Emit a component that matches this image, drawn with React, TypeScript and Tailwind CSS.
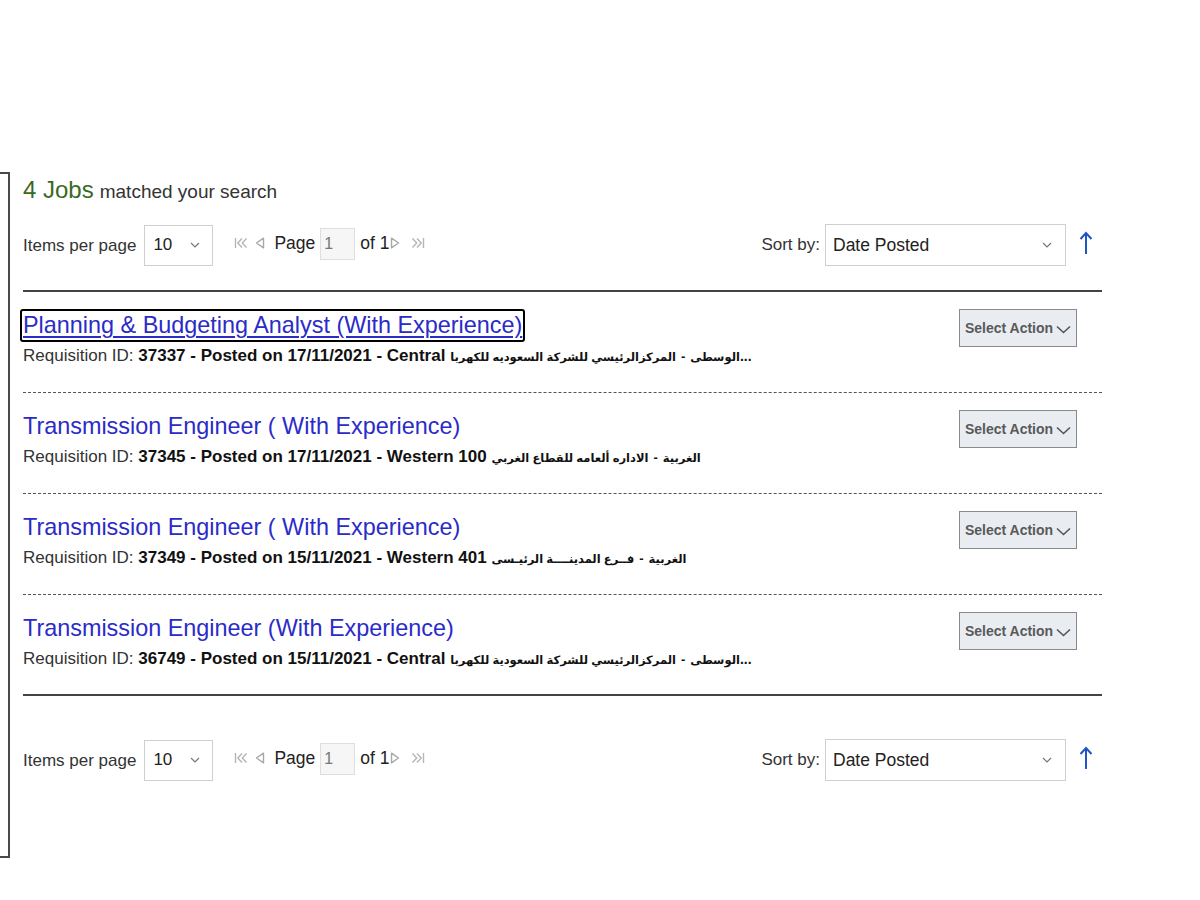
import React from "react";

const FirstIcon = () => (
  <svg width="14" height="12" viewBox="0 0 14 12" fill="none" stroke="#b5b5b5" strokeWidth="1.4">
    <path d="M1.5 1v10" />
    <path d="M8 1.5 L3.8 6 L8 10.5" />
    <path d="M12.5 1.5 L8.3 6 L12.5 10.5" />
  </svg>
);
const LastIcon = () => (
  <svg width="14" height="12" viewBox="0 0 14 12" fill="none" stroke="#b5b5b5" strokeWidth="1.4">
    <path d="M12.5 1v10" />
    <path d="M6 1.5 L10.2 6 L6 10.5" />
    <path d="M1.5 1.5 L5.7 6 L1.5 10.5" />
  </svg>
);
const PrevIcon = () => (
  <svg width="10" height="12" viewBox="0 0 10 12" fill="none" stroke="#a8a8a8" strokeWidth="1.4" strokeLinejoin="round">
    <path d="M8.5 1.2 L1.5 6 L8.5 10.8 Z" />
  </svg>
);
const NextIcon = () => (
  <svg width="10" height="12" viewBox="0 0 10 12" fill="none" stroke="#a8a8a8" strokeWidth="1.4" strokeLinejoin="round">
    <path d="M1.5 1.2 L8.5 6 L1.5 10.8 Z" />
  </svg>
);
const SmallChevron = () => (
  <svg width="10" height="6" viewBox="0 0 10 6" fill="none" stroke="#777" strokeWidth="1.2">
    <path d="M1 1 L5 5 L9 1" />
  </svg>
);
const ActionChevron = () => (
  <svg width="15" height="9" viewBox="0 0 15 9" fill="none" stroke="#555" strokeWidth="1.6">
    <path d="M1 1.5 L7.5 7.5 L14 1.5" />
  </svg>
);
const UpArrow = () => (
  <svg width="14" height="24" viewBox="0 0 14 24" fill="none" stroke="#1f55c4" strokeWidth="2">
    <path d="M7 23 V2" />
    <path d="M1.5 8 L7 2 L12.5 8" />
  </svg>
);

function Toolbar() {
  return (
    <div className="flex items-center justify-between h-[42px] pr-[9px]">
      <div className="flex items-center">
        <span className="text-[17px] text-[#333] leading-none">Items per page</span>
        <div className="ml-[8px] w-[69px] h-[41px] border border-[#cfcfcf] bg-white flex items-center justify-between pl-[8px] pr-[12px]">
          <span className="text-[17px] text-[#222]">10</span>
          <SmallChevron />
        </div>
        <div className="flex items-center ml-[21px] -mt-[4px]">
          <FirstIcon />
          <span className="ml-[7px]"><PrevIcon /></span>
          <span className="ml-[9px] text-[17.5px] text-[#222]">Page</span>
          <div className="ml-[5px] w-[35px] h-[32px] border border-[#dedede] bg-[#f6f6f6] flex items-center pl-[3px] mt-[2px]">
            <span className="text-[16px] text-[#777]">1</span>
          </div>
          <span className="ml-[5px] text-[17.5px] text-[#222]">of 1</span>
          <span className="ml-[1px]"><NextIcon /></span>
          <span className="ml-[11px]"><LastIcon /></span>
        </div>
      </div>
      <div className="flex items-center">
        <span className="text-[17px] text-[#333]">Sort by:</span>
        <div className="ml-[5px] w-[241px] h-[42px] border border-[#cfcfcf] bg-white flex items-center justify-between pl-[7px] pr-[13px]">
          <span className="text-[17.5px] text-[#222]">Date Posted</span>
          <SmallChevron />
        </div>
        <span className="ml-[13px] -mt-[4px]"><UpArrow /></span>
      </div>
    </div>
  );
}

type Job = {
  title: string;
  id: string;
  date: string;
  region: string;
  ar1: string;
  ar2: string;
  ellipsis: boolean;
  focused?: boolean;
};

const jobs: Job[] = [
  {
    title: "Planning & Budgeting Analyst (With Experience)",
    id: "37337",
    date: "17/11/2021",
    region: "Central",
    ar1: "المركزالرئيسي للشركة السعوديه للكهربا",
    ar2: "الوسطى",
    ellipsis: true,
    focused: true,
  },
  {
    title: "Transmission Engineer ( With Experience)",
    id: "37345",
    date: "17/11/2021",
    region: "Western 100",
    ar1: "الاداره ألعامه للقطاع الغربي",
    ar2: "الغربية",
    ellipsis: false,
  },
  {
    title: "Transmission Engineer ( With Experience)",
    id: "37349",
    date: "15/11/2021",
    region: "Western 401",
    ar1: "فــرع المدينــــة الرئيـسى",
    ar2: "الغربية",
    ellipsis: false,
  },
  {
    title: "Transmission Engineer (With Experience)",
    id: "36749",
    date: "15/11/2021",
    region: "Central",
    ar1: "المركزالرئيسي للشركة السعودية للكهربا",
    ar2: "الوسطى",
    ellipsis: true,
  },
];

function JobRow({ job, last }: { job: Job; last: boolean }) {
  return (
    <div
      className={
        last
          ? "h-[101px] border-b-2 border-solid border-[#444] pt-[17px] flex justify-between items-start"
          : "h-[101px] border-b border-dashed border-[#555] pt-[17px] flex justify-between items-start"
      }
    >
      <div className="flex flex-col">
        <div className="h-[33px]">
          <a
            href="#"
            className={
              job.focused
                ? "inline-block -ml-[3px] px-[1px] border-2 border-black rounded-[3px] text-[23.4px] leading-[29px] text-[#2b2bc8] underline underline-offset-[3px] decoration-[1.5px]"
                : "inline-block -ml-[3px] px-[1px] border-2 border-transparent rounded-[3px] text-[23.4px] leading-[29px] text-[#2b2bc8] no-underline"
            }
          >
            {job.title}
          </a>
        </div>
        <div className="mt-[3px] h-[22px] leading-[22px] text-[17px] whitespace-nowrap">
          <span className="text-[#333]">Requisition ID: </span>
          <span className="font-bold text-[#111]">
            {job.id} - Posted on {job.date} - {job.region}{" "}
          </span>
          <bdi dir="rtl" className="font-bold text-[11.5px] text-[#111]">{job.ar1}</bdi>
          <span className="font-bold text-[#111] text-[13px] px-[5px]">-</span>
          <bdi dir="rtl" className="font-bold text-[11.5px] text-[#111]">{job.ar2}</bdi>
          {job.ellipsis && <span className="font-bold text-[#111] text-[14px]">...</span>}
        </div>
      </div>
      <button className="mr-[25px] w-[118px] h-[38px] border border-[#8a8a8a] bg-[#e9edf1] flex items-center justify-center gap-[3px] text-[14px] font-bold text-[#595959]">
        <span>Select Action</span>
        <span className="mt-[3px]"><ActionChevron /></span>
      </button>
    </div>
  );
}

export default function App() {
  return (
    <div className="w-[1200px] h-[900px] bg-white overflow-hidden font-['Liberation_Sans','DejaVu_Sans',sans-serif]">
      <div className="pt-[172px] flex items-start">
        <div className="w-[10px] h-[686px] border-t-2 border-r-2 border-b-2 border-[#4a4a4a] shrink-0" />
        <div className="ml-[13px] w-[1079px]">
          <div className="mt-[3px] h-[30px] flex items-baseline whitespace-nowrap leading-[30px]">
            <span className="text-[24px] text-[#386a1f]">4 Jobs</span>
            <span className="ml-[6px] text-[19px] text-[#333]">matched your search</span>
          </div>
          <div className="mt-[19px]">
            <Toolbar />
          </div>
          <div className="mt-[24px] h-[2px] bg-[#444]" />
          {jobs.map((j, i) => (
            <JobRow key={i} job={j} last={i === jobs.length - 1} />
          ))}
          <div className="mt-[43px]">
            <Toolbar />
          </div>
        </div>
      </div>
    </div>
  );
}
